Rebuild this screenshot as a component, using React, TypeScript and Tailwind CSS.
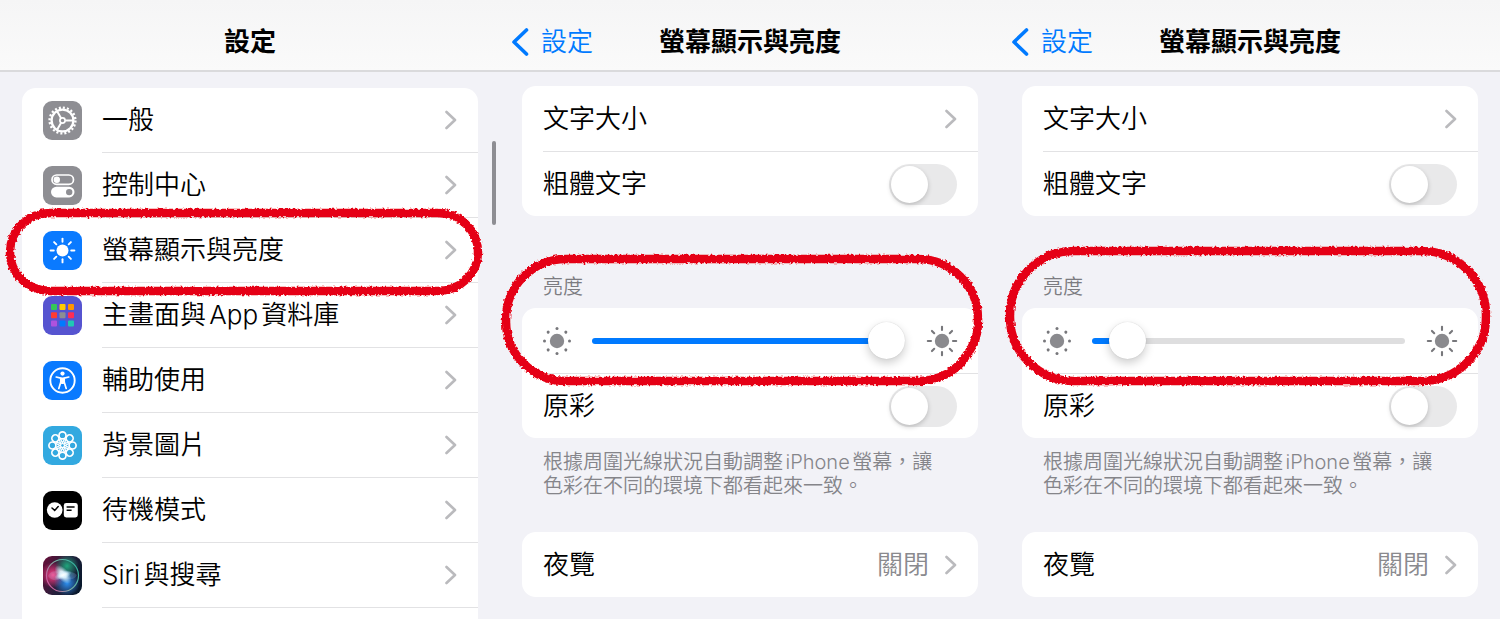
import { useId, useState, type ReactNode } from 'react';

const TURNS = [0, 45, 90, 135, 180, 225, 270, 315];

function GearIcon() {
  return (
    <svg viewBox="0 0 39 39" className="size-full" fill="none" stroke="white">
      <rect width="39" height="39" fill="#8e8e93" stroke="none" />
      <circle cx="19.5" cy="19.5" r="12.9" strokeWidth="2.4" strokeDasharray="2.05 2" />
      <circle cx="19.5" cy="19.5" r="10.9" strokeWidth="2.3" />
      <circle cx="19.5" cy="19.5" r="2.6" strokeWidth="1.7" />
      <path d="M22.2 19.5H30M18.1 17.2L14.1 10.2M18.1 21.8L14.1 28.8" strokeWidth="2" />
    </svg>
  );
}

function ControlCenterIcon() {
  return (
    <svg viewBox="0 0 39 39" className="size-full">
      <rect width="39" height="39" fill="#8e8e93" />
      <rect x="9" y="9" width="21.5" height="9.4" rx="4.7" fill="none" stroke="white" strokeWidth="1.7" />
      <circle cx="13.8" cy="13.7" r="3.2" fill="white" />
      <rect x="8" y="20.8" width="23.5" height="10.6" rx="5.3" fill="white" />
      <circle cx="26.2" cy="26.1" r="3.2" fill="#8e8e93" />
    </svg>
  );
}

function DisplayIcon() {
  return (
    <svg viewBox="0 0 39 39" className="size-full">
      <rect width="39" height="39" fill="#0a7aff" />
      <circle cx="19.5" cy="19.5" r="6" fill="white" />
      {TURNS.map((turn) => (
        <path
          key={turn}
          d="M19.5 7.6V10.8"
          stroke="white"
          strokeWidth="1.9"
          strokeLinecap="round"
          transform={`rotate(${turn} 19.5 19.5)`}
        />
      ))}
    </svg>
  );
}

const HOME_TILES = [
  '#34c759', '#ffcc00', '#ff9500',
  '#ff3b30', '#8e8e93', '#ff2d55',
  '#af52de', '#007aff', '#1fc9b4',
];

function HomeScreenIcon() {
  return (
    <svg viewBox="0 0 39 39" className="size-full">
      <rect width="39" height="39" fill="#5654d0" />
      {HOME_TILES.map((color, i) => (
        <rect
          key={color}
          x={8 + (i % 3) * 8.5}
          y={8 + Math.floor(i / 3) * 8.3}
          width="6"
          height="6"
          rx="1"
          fill={color}
        />
      ))}
    </svg>
  );
}

function AccessibilityIcon() {
  return (
    <svg viewBox="0 0 39 39" className="size-full">
      <rect width="39" height="39" fill="#0a7aff" />
      <circle cx="19.5" cy="19.5" r="12.2" fill="none" stroke="white" strokeWidth="1.9" />
      <circle cx="19.5" cy="12.6" r="2.1" fill="white" />
      <path
        d="M13.2 16L17.8 17.1V21L15.8 27.4M25.8 16L21.2 17.1V21L23.2 27.4"
        fill="none"
        stroke="white"
        strokeWidth="1.7"
        strokeLinecap="round"
        strokeLinejoin="round"
      />
      <path d="M17.4 16.4H21.6V21.4L20.6 23H18.4L17.4 21.4Z" fill="white" />
    </svg>
  );
}

function WallpaperIcon() {
  return (
    <svg viewBox="0 0 39 39" className="size-full" fill="none" stroke="white">
      <rect width="39" height="39" fill="#33a9e0" stroke="none" />
      {TURNS.map((turn) => (
        <g key={turn} transform={`rotate(${turn} 19.5 19.5)`}>
          <circle cx="19.5" cy="9.4" r="3.5" strokeWidth="1.7" />
          <path d="M17.2 12.2L19.5 17L21.8 12.2" strokeWidth="1.3" />
        </g>
      ))}
      <circle cx="19.5" cy="19.5" r="2" strokeWidth="1.1" />
    </svg>
  );
}

function StandByIcon() {
  return (
    <svg viewBox="0 0 39 39" className="size-full">
      <rect width="39" height="39" fill="black" />
      <circle cx="11.7" cy="19" r="7.8" fill="white" />
      <path d="M9 17L11.7 19.4L15.2 15.6" fill="none" stroke="black" strokeWidth="1.5" strokeLinecap="round" />
      <rect x="20.8" y="12" width="14" height="14.4" rx="2.4" fill="white" />
      <path d="M23.6 16H31.6M23.6 19.3H28.6" stroke="black" strokeWidth="1.4" />
    </svg>
  );
}

function SiriIcon() {
  return (
    <svg viewBox="0 0 39 39" className="size-full">
      <defs>
        <linearGradient id="siri-back" x1="0" y1="0.3" x2="1" y2="0.7">
          <stop offset="0" stopColor="#5e1038" />
          <stop offset="0.5" stopColor="#23203c" />
          <stop offset="1" stopColor="#08182c" />
        </linearGradient>
        <linearGradient id="siri-ring" x1="0" y1="0.8" x2="1" y2="0.2">
          <stop offset="0" stopColor="#d94fa0" />
          <stop offset="0.5" stopColor="#7fb3a4" />
          <stop offset="1" stopColor="#2bb5a0" />
        </linearGradient>
        <radialGradient id="siri-pink">
          <stop offset="0" stopColor="#ff3d86" />
          <stop offset="1" stopColor="#ff3d86" stopOpacity="0" />
        </radialGradient>
        <radialGradient id="siri-green">
          <stop offset="0" stopColor="#1fa57c" />
          <stop offset="1" stopColor="#1fa57c" stopOpacity="0" />
        </radialGradient>
        <radialGradient id="siri-blue">
          <stop offset="0" stopColor="#2d8ff0" />
          <stop offset="1" stopColor="#2d8ff0" stopOpacity="0" />
        </radialGradient>
        <radialGradient id="siri-glow">
          <stop offset="0" stopColor="white" />
          <stop offset="0.35" stopColor="#e8f8ff" stopOpacity="0.9" />
          <stop offset="1" stopColor="#bfeaff" stopOpacity="0" />
        </radialGradient>
      </defs>
      <rect width="39" height="39" fill="url(#siri-back)" />
      <circle cx="10" cy="19" r="13" fill="url(#siri-pink)" />
      <circle cx="24" cy="10" r="12" fill="url(#siri-green)" />
      <circle cx="24" cy="27" r="13" fill="url(#siri-blue)" />
      <path d="M5 20C9 12 17 16 20 19C25 14 31 16 34 19C31 25 24 24 20 20C15 26 8 25 5 20Z" fill="#a8d6f5" opacity="0.2" />
      <ellipse cx="20" cy="18.5" rx="11" ry="6" fill="url(#siri-glow)" transform="rotate(50 20 18.5)" />
      <ellipse cx="20" cy="19" rx="9" ry="4" fill="url(#siri-glow)" transform="rotate(-20 20 19)" />
      <circle cx="19.5" cy="19.5" r="16" fill="none" stroke="url(#siri-ring)" strokeWidth="1.2" />
    </svg>
  );
}

function Chevron() {
  return (
    <svg viewBox="0 0 12 20" className="h-5 w-3 shrink-0" fill="none" stroke="#bababd" strokeWidth="2.6">
      <path d="M1.5 2L10 10L1.5 18" strokeLinecap="round" strokeLinejoin="round" />
    </svg>
  );
}

function SunDim() {
  return (
    <svg viewBox="0 0 28 28" className="size-7 shrink-0" fill="#8a8a8e">
      <circle cx="14" cy="14" r="7.2" />
      {TURNS.map((turn) => (
        <circle key={turn} cx="14" cy="1.5" r="1.5" fill="#77777b" transform={`rotate(${turn} 14 14)`} />
      ))}
    </svg>
  );
}

function SunBright() {
  return (
    <svg viewBox="0 0 32 32" className="size-8 shrink-0" fill="#8a8a8e">
      <circle cx="16" cy="16" r="7.2" />
      {TURNS.map((turn) => (
        <path
          key={turn}
          d="M16 1.8V5"
          stroke="#77777b"
          strokeWidth="2.1"
          strokeLinecap="round"
          transform={`rotate(${turn} 16 16)`}
        />
      ))}
    </svg>
  );
}

// Crayon-like outline that fills its positioned parent
function MarkerRing({ radius, className }: { radius: number; className: string }) {
  const id = useId();
  return (
    <div className={`pointer-events-none absolute z-10 ${className}`}>
      <svg className="size-full overflow-visible" aria-hidden="true">
        <filter id={id} x="-5%" y="-20%" width="110%" height="140%">
          <feTurbulence type="fractalNoise" baseFrequency="0.4" numOctaves="2" seed="4" result="noise" />
          <feDisplacementMap in="SourceGraphic" in2="noise" scale="4" xChannelSelector="R" yChannelSelector="G" />
        </filter>
        <rect
          width="100%"
          height="100%"
          rx={radius}
          fill="none"
          stroke="#e50014"
          strokeWidth="8.5"
          filter={`url(#${id})`}
        />
      </svg>
    </div>
  );
}

function NavBar({ title, back }: { title: string; back?: string }) {
  return (
    <header className="grid grid-cols-[1fr_auto_1fr] items-center border-b-2 border-[#dadadc] bg-linear-to-b from-[#f5f5f6] to-[#fafafa] pt-[22px] pb-2 leading-10">
      <div>
        {back && (
          <button type="button" className="flex items-center gap-3 pl-[11px] text-[#007aff]">
            <svg viewBox="0 0 18 28" className="h-7 w-[18px]" fill="none" stroke="currentColor" strokeWidth="3.6">
              <path d="M15.5 2L3 14L15.5 26" strokeLinecap="round" strokeLinejoin="round" />
            </svg>
            {back}
          </button>
        )}
      </div>
      <h1 className="font-bold">{title}</h1>
    </header>
  );
}

const MENU = [
  { label: '一般', icon: <GearIcon /> },
  { label: '控制中心', icon: <ControlCenterIcon /> },
  { label: '螢幕顯示與亮度', icon: <DisplayIcon />, marked: true },
  { label: '主畫面與App資料庫', icon: <HomeScreenIcon /> },
  { label: '輔助使用', icon: <AccessibilityIcon /> },
  { label: '背景圖片', icon: <WallpaperIcon /> },
  { label: '待機模式', icon: <StandByIcon /> },
  { label: 'Siri與搜尋', icon: <SiriIcon /> },
];

function SettingsMenu() {
  return (
    <section className="relative flex flex-col">
      <NavBar title="設定" />
      <ul className="mx-[22px] mt-4 flex-1 rounded-t-[14px] bg-white">
        {MENU.map((item) => (
          <li key={item.label} className="relative">
            <button type="button" className="flex w-full items-center gap-5 pl-[21px] text-left">
              <span className="size-[39px] shrink-0 overflow-hidden rounded-[9px]">{item.icon}</span>
              <span className="flex h-[65px] flex-1 items-center justify-between border-b border-[#e2e2e4] pr-[21px]">
                {item.label}
                <Chevron />
              </span>
            </button>
            {item.marked && <MarkerRing radius={40} className="-top-[5px] right-0 -bottom-2 -left-3" />}
          </li>
        ))}
      </ul>
      <div className="absolute top-[141px] right-1 h-[84px] w-1 rounded-full bg-[#8e8e93]" />
    </section>
  );
}

function Card({ children }: { children: ReactNode }) {
  return <div className="rounded-[14px] bg-white pl-[21px]">{children}</div>;
}

function LinkRow({ label, value }: { label: string; value?: string }) {
  return (
    <button type="button" className="flex h-[65px] w-full items-center gap-4 pr-[21px]">
      <span className="flex-1 text-left">{label}</span>
      {value && <span className="text-[#8a8a8e]">{value}</span>}
      <Chevron />
    </button>
  );
}

function SwitchRow({ label }: { label: string }) {
  return (
    <label className="flex h-[65px] items-center justify-between border-t border-[#e2e2e4] pr-[21px]">
      {label}
      <input
        type="checkbox"
        role="switch"
        className="h-[41px] w-[68px] appearance-none rounded-full bg-[#e9e9ea] p-[2px] before:block before:size-[37px] before:rounded-full before:bg-white before:shadow-[0_2px_5px_rgba(0,0,0,0.2)] before:content-[''] checked:bg-[#34c759] checked:before:ml-[27px]"
      />
    </label>
  );
}

function BrightnessSlider({ initial }: { initial: number }) {
  const [value, setValue] = useState(initial);
  // the thumb is 37px wide, so its centre never reaches the ends of the track
  const fill = `calc(18px + (100% - 37px) * ${value / 100})`;

  return (
    <div className="flex h-[65px] items-center gap-[21px] pr-5">
      <SunDim />
      <input
        type="range"
        aria-label="亮度"
        min={0}
        max={100}
        value={value}
        onChange={(e) => setValue(Number(e.target.value))}
        style={{ backgroundImage: `linear-gradient(to right, #007aff ${fill}, #dededf ${fill})` }}
        className="h-[6px] min-w-0 flex-1 appearance-none rounded-full [&::-webkit-slider-thumb]:size-[37px] [&::-webkit-slider-thumb]:appearance-none [&::-webkit-slider-thumb]:rounded-full [&::-webkit-slider-thumb]:bg-white [&::-webkit-slider-thumb]:shadow-[0_4px_10px_rgba(0,0,0,0.2),0_0_1px_rgba(0,0,0,0.2)]"
      />
      <SunBright />
    </div>
  );
}

function DisplaySettings({ brightness, ring, radius }: { brightness: number; ring: string; radius: number }) {
  return (
    <section className="flex flex-col">
      <NavBar title="螢幕顯示與亮度" back="設定" />
      <div className="mx-[22px] mt-[14px]">
        <Card>
          <LinkRow label="文字大小" />
          <SwitchRow label="粗體文字" />
        </Card>
        <div className="relative mt-14">
          <h2 className="pt-px pb-[7px] pl-[21px] text-[20px] leading-7 text-[#7c7c81]">亮度</h2>
          <Card>
            <BrightnessSlider initial={brightness} />
            <SwitchRow label="原彩" />
          </Card>
          <MarkerRing radius={radius} className={ring} />
        </div>
        <p className="mt-3 mb-[34px] pr-7 pl-[21px] text-[20px] leading-6 text-[#85858a]">
          根據周圍光線狀況自動調整iPhone螢幕，讓色彩在不同的環境下都看起來一致。
        </p>
        <Card>
          <LinkRow label="夜覽" value="關閉" />
        </Card>
      </div>
    </section>
  );
}

export default function App() {
  return (
    <main
      lang="zh-TW"
      className="grid min-h-screen grid-cols-3 overflow-hidden bg-[#f2f2f7] font-[Inter,'Noto_Sans_CJK_TC',sans-serif] text-[26px] leading-8 font-[350] text-black [text-autospace:normal]"
    >
      <SettingsMenu />
      <DisplaySettings brightness={100} radius={60} ring="-top-[13px] right-0 bottom-[57px] -left-4" />
      <DisplaySettings brightness={6} radius={64} ring="-top-[21px] -right-2 bottom-[57px] -left-3" />
    </main>
  );
}
